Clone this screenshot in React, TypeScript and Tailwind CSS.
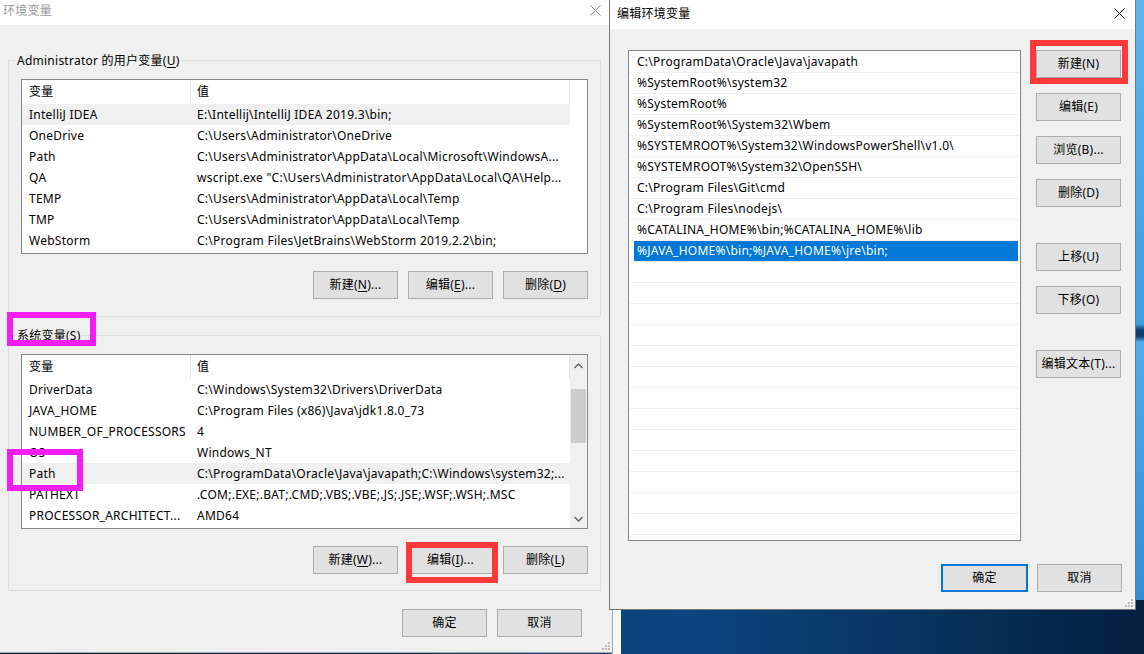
import React from 'react';

const userVars: [string, string][] = [
  ['IntelliJ IDEA', 'E:\\Intellij\\IntelliJ IDEA 2019.3\\bin;'],
  ['OneDrive', 'C:\\Users\\Administrator\\OneDrive'],
  ['Path', 'C:\\Users\\Administrator\\AppData\\Local\\Microsoft\\WindowsA...'],
  ['QA', 'wscript.exe "C:\\Users\\Administrator\\AppData\\Local\\QA\\Help...'],
  ['TEMP', 'C:\\Users\\Administrator\\AppData\\Local\\Temp'],
  ['TMP', 'C:\\Users\\Administrator\\AppData\\Local\\Temp'],
  ['WebStorm', 'C:\\Program Files\\JetBrains\\WebStorm 2019.2.2\\bin;'],
];

const sysVars: [string, string][] = [
  ['DriverData', 'C:\\Windows\\System32\\Drivers\\DriverData'],
  ['JAVA_HOME', 'C:\\Program Files (x86)\\Java\\jdk1.8.0_73'],
  ['NUMBER_OF_PROCESSORS', '4'],
  ['OS', 'Windows_NT'],
  ['Path', 'C:\\ProgramData\\Oracle\\Java\\javapath;C:\\Windows\\system32;...'],
  ['PATHEXT', '.COM;.EXE;.BAT;.CMD;.VBS;.VBE;.JS;.JSE;.WSF;.WSH;.MSC'],
  ['PROCESSOR_ARCHITECT...', 'AMD64'],
];

const pathItems = [
  'C:\\ProgramData\\Oracle\\Java\\javapath',
  '%SystemRoot%\\system32',
  '%SystemRoot%',
  '%SystemRoot%\\System32\\Wbem',
  '%SYSTEMROOT%\\System32\\WindowsPowerShell\\v1.0\\',
  '%SYSTEMROOT%\\System32\\OpenSSH\\',
  'C:\\Program Files\\Git\\cmd',
  'C:\\Program Files\\nodejs\\',
  '%CATALINA_HOME%\\bin;%CATALINA_HOME%\\lib',
  '%JAVA_HOME%\\bin;%JAVA_HOME%\\jre\\bin;',
];

function CloseX({ color }: { color: string }) {
  return (
    <svg width="11" height="11" viewBox="0 0 11 11">
      <path d="M0.5 0.5 L10.5 10.5 M10.5 0.5 L0.5 10.5" stroke={color} strokeWidth="1" />
    </svg>
  );
}

function Grip() {
  return (
    <svg width="8" height="8" viewBox="0 0 8 8" className="absolute right-[2px] bottom-[2px]">
      {[[6, 0], [3, 3], [6, 3], [0, 6], [3, 6], [6, 6]].map(([x, y], i) => (
        <rect key={i} x={x} y={y} width="2" height="2" fill="#bcbcbc" />
      ))}
    </svg>
  );
}

function Btn({ children, primary, w = 'w-[85px]' }: any) {
  return (
    <div
      className={`h-[28px] ${w} flex items-center justify-center bg-[#e1e1e1] text-[12px] leading-[16px] text-black ${
        primary ? 'border-2 border-[#0078d7]' : 'border border-[#adadad]'
      }`}
    >
      {children}
    </div>
  );
}

function U({ children }: any) {
  return <span className="underline underline-offset-[2px]">{children}</span>;
}

function VarTable({ rows, selected, scroll }: { rows: [string, string][]; selected: number; scroll?: boolean }) {
  return (
    <div className="h-[175px] border border-[#828790] bg-white flex overflow-hidden">
      <div className="w-[548px] flex flex-col">
        <div className="h-[24px] flex text-[12px] leading-[16px] text-black">
          <div className="w-[169px] pl-[7px] flex items-center border-r border-[#e5e5e5]">变量</div>
          <div className="flex-1 pl-[6px] flex items-center border-r border-[#e5e5e5]">值</div>
        </div>
        {rows.map(([k, v], i) => (
          <div
            key={k + i}
            className={`h-[21px] flex items-center text-[12px] leading-[16px] text-black whitespace-nowrap ${
              i === selected ? 'bg-[#f0f0f0]' : ''
            }`}
          >
            <div className="w-[169px] pl-[7px]">{k}</div>
            <div className="flex-1 pl-[6px]">{v}</div>
          </div>
        ))}
      </div>
      <div className={`w-[17px] flex flex-col items-center ${scroll ? 'bg-[#f0f0f0]' : ''}`}>
        {scroll && (
          <>
            <svg width="9" height="6" viewBox="0 0 9 6" className="mt-[8px]">
              <path d="M0.5 5 L4.5 1 L8.5 5" stroke="#606060" strokeWidth="1.3" fill="none" />
            </svg>
            <div className="mt-[20px] w-[15px] h-[54px] bg-[#cdcdcd]" />
            <div className="flex-1" />
            <svg width="9" height="6" viewBox="0 0 9 6" className="mb-[6px]">
              <path d="M0.5 1 L4.5 5 L8.5 1" stroke="#606060" strokeWidth="1.3" fill="none" />
            </svg>
          </>
        )}
      </div>
    </div>
  );
}

export default function App() {
  return (
    <div className="relative w-[1144px] h-[654px] overflow-hidden bg-[linear-gradient(90deg,#04213f,#0a3f73_45%,#0b4680_60%,#03203f)] font-['Noto_Sans','Noto_Sans_CJK_SC',sans-serif] leading-none tracking-[0.25px]">
      {/* desktop wallpaper strip on the right */}
      <div className="absolute left-[1135px] top-0 w-[9px] h-[600px] bg-[linear-gradient(180deg,#5ab6f2,#3b9fe6_54%,#0a3f72_55%,#0a3f72_56%,#4aaef0_57%,#2f8fda)]" />
      <div className="absolute left-[612px] top-[609px] w-[9px] h-[45px] bg-[#f7f7f7]" />

      {/* 环境变量 */}
      <div className="absolute left-0 top-0 w-[613px] h-[653px] bg-[#f0f0f0] border-r border-b border-[#a9a9a9] flex flex-col">
        <div className="h-[25px] bg-white flex items-center justify-between pl-[3px] pr-[11px] pb-[4px]">
          <span className="text-[12px] leading-[16px] text-[#9a9a9a]">环境变量</span>
          <CloseX color="#8a8a8a" />
        </div>

        <fieldset className="mt-[27px] ml-[8px] mr-[12px] border border-[#dcdcdc] px-[12px] pb-[17px]">
          <legend className="-ml-[5px] px-[1px] text-[12px] leading-[17px] text-black">
            Administrator 的用户变量(<U>U</U>)
          </legend>
          <div className="mt-[10px]">
            <VarTable rows={userVars} selected={0} />
          </div>
          <div className="mt-[17px] flex justify-end gap-[10px]">
            <Btn>新建(<U>N</U>)...</Btn>
            <Btn>编辑(<U>E</U>)...</Btn>
            <Btn>删除(<U>D</U>)</Btn>
          </div>
        </fieldset>

        <fieldset className="mt-[10px] ml-[8px] mr-[12px] border border-[#dcdcdc] px-[12px] pb-[16px]">
          <legend className="-ml-[5px] px-[1px] text-[12px] leading-[17px] text-black">
            系统变量(<U>S</U>)
          </legend>
          <div className="mt-[10px]">
            <VarTable rows={sysVars} selected={4} scroll />
          </div>
          <div className="mt-[17px] flex justify-end gap-[10px]">
            <Btn>新建(<U>W</U>)...</Btn>
            <Btn>编辑(<U>I</U>)...</Btn>
            <Btn>删除(<U>L</U>)</Btn>
          </div>
        </fieldset>

        <div className="mt-[18px] pr-[30px] flex justify-end gap-[10px]">
          <Btn>确定</Btn>
          <Btn>取消</Btn>
        </div>
        <Grip />
      </div>

      {/* 编辑环境变量 */}
      <div className="absolute left-[609px] top-0 w-[527px] h-[610px] bg-[#f0f0f0] border-l border-r border-b border-[#767676] flex flex-col">
        <div className="h-[29px] bg-white flex items-center justify-between pl-[7px] pr-[10px] pb-[2px]">
          <span className="text-[12px] leading-[16px] text-black">编辑环境变量</span>
          <CloseX color="#000000" />
        </div>
        <div className="flex mt-[21px] ml-[18px]">
          <div className="w-[393px] h-[491px] border border-[#828790] bg-white pt-[1px] overflow-hidden">
            {Array.from({ length: 24 }).map((_, i) => (
              <div key={i} className="mx-[1px] h-[21px] border-b border-[#f0f0f0] flex">
                {i < pathItems.length && (
                  <div
                    className={`ml-[4px] mr-[1px] flex-1 pl-[3px] flex items-center text-[12px] leading-[16px] whitespace-nowrap ${
                      i === 9 ? 'bg-[#0078d7] text-white' : 'text-black'
                    }`}
                  >
                    {pathItems[i]}
                  </div>
                )}
              </div>
            ))}
          </div>
          <div className="ml-[15px] flex flex-col gap-[15px]">
            <Btn>新建(N)</Btn>
            <Btn>编辑(E)</Btn>
            <Btn>浏览(B)...</Btn>
            <Btn>删除(D)</Btn>
            <div className="mt-[21px]">
              <Btn>上移(U)</Btn>
            </div>
            <Btn>下移(O)</Btn>
            <div className="mt-[21px]">
              <Btn>编辑文本(T)...</Btn>
            </div>
          </div>
        </div>
        <div className="mt-[23px] pr-[13px] flex justify-end gap-[9px]">
          <Btn primary w="w-[87px]">确定</Btn>
          <Btn>取消</Btn>
        </div>
        <Grip />
      </div>

      {/* annotations */}
      <div className="absolute left-[7px] top-[312px] w-[89px] h-[34px] border-[6px] border-[#f41ef4]" />
      <div className="absolute left-[7px] top-[449px] w-[76px] h-[42px] border-[6px] border-[#f41ef4]" />
      <div className="absolute left-[406px] top-[542px] w-[92px] h-[41px] border-[6px] border-[#fd3a3a]" />
      <div className="absolute left-[1030px] top-[40px] w-[98px] h-[44px] border-[6px] border-[#fd3a3a]" />
    </div>
  );
}
